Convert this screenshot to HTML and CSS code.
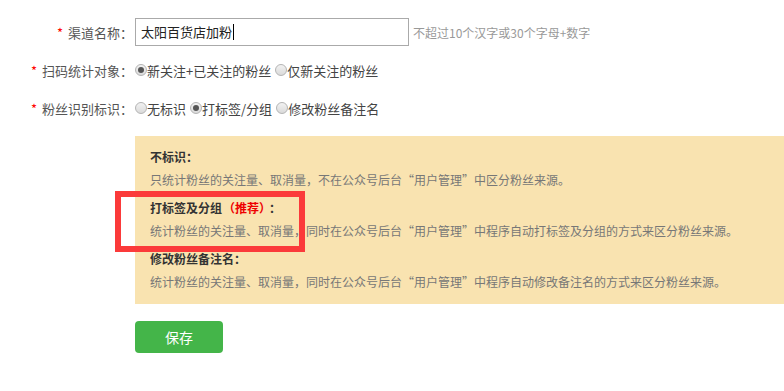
FILE: index.html
```html
<!DOCTYPE html>
<html>
	<head>
		<meta charset="utf-8">
		<title>渠道设置</title>
		<link rel="stylesheet" href="styles.css">
	</head>
	<body>
		<div class="form">
			<div class="row">
				<label class="label"><em>*</em> 渠道名称：</label>
				<div class="input">太阳百货店加粉<span class="caret"></span></div>
				<span class="hint">不超过10个汉字或30个字母+数字</span>
			</div>
			<div class="row">
				<label class="label"><em>*</em> 扫码统计对象：</label>
				<span class="radio checked"></span><span class="opt">新关注+已关注的粉丝</span>
				<span class="radio"></span><span class="opt">仅新关注的粉丝</span>
			</div>
			<div class="row">
				<label class="label"><em>*</em> 粉丝识别标识：</label>
				<span class="radio"></span><span class="opt">无标识</span>
				<span class="radio checked"></span><span class="opt">打标签/分组</span>
				<span class="radio"></span><span class="opt">修改粉丝备注名</span>
			</div>

			<div class="tips">
				<div class="block">
					<h4>不标识：</h4>
					<p>只统计粉丝的关注量、取消量，不在公众号后台“用户管理”中区分粉丝来源。</p>
				</div>
				<div class="block">
					<h4>打标签及分组<span class="red">（推荐）</span>：</h4>
					<p>统计粉丝的关注量、取消量，同时在公众号后台“用户管理”中程序自动打标签及分组的方式来区分粉丝来源。</p>
				</div>
				<div class="block">
					<h4>修改粉丝备注名：</h4>
					<p>统计粉丝的关注量、取消量，同时在公众号后台“用户管理”中程序自动修改备注名的方式来区分粉丝来源。</p>
				</div>
				<!-- 标注框 -->
				<div class="mark"></div>
			</div>

			<button class="save">保存</button>
		</div>
	</body>
</html>
```

FILE: styles.css
```css
*{
	margin: 0;
	padding: 0;
	box-sizing: border-box;
}

body{
	font-family: "Noto Sans CJK SC", "Liberation Sans", sans-serif;
	font-size: 13px;
	color: #444;
	background: #fff;
	overflow: hidden;
}

.form{
	padding-top: 18px;
}

.row{
	display: flex;
	align-items: center;
	height: 28px;
	margin-bottom: 10px;
}

.label{
	width: 135px;
	padding-right: 2px;
	text-align: right;
	flex-shrink: 0;
	color: #555;
}
.label em{
	font-style: normal;
	color: #f00;
	margin-right: 2px;
}

.input{
	width: 274px;
	height: 28px;
	border: 1px solid #aaa;
	padding-left: 5px;
	line-height: 26px;
	color: #222;
	display: flex;
	align-items: center;
}
.input .caret{
	display: inline-block;
	width: 1px;
	height: 16px;
	background: #000;
	margin-left: 1px;
}

.hint{
	font-size: 12px;
	color: #999;
	margin-left: 4px;
}

.radio{
	width: 12px;
	height: 12px;
	border-radius: 50%;
	border: 1px solid #b4b4b4;
	background: linear-gradient(#f2f2f2, #dadada);
	position: relative;
	flex-shrink: 0;
}
.radio.checked::after{
	content: "";
	position: absolute;
	left: 2px;
	top: 2px;
	width: 6px;
	height: 6px;
	border-radius: 50%;
	background: #555;
}
.opt{
	margin-right: 4px;
}

.tips{
	position: relative;
	margin: 14px 0 17px 135px;
	padding: 10px 15px 5px;
	background-color: #f9e3b0;
	font-size: 12px;
}
.tips .block{
	margin-bottom: 5px;
}
.tips h4{
	font-size: 12px;
	line-height: 22px;
	color: #333;
	font-weight: bold;
}
.tips h4 .red{
	color: #e00;
	margin: 0 4px 0 1px;
}
.tips p{
	line-height: 24px;
	color: #777;
}

.tips .mark{
	position: absolute;
	left: -20px;
	top: 55px;
	width: 190px;
	height: 61px;
	border: 6px solid #fb3a3a;
}

.save{
	display: block;
	margin-left: 135px;
	width: 88px;
	height: 32px;
	border: none;
	border-radius: 4px;
	background-color: #44b549;
	color: #fff;
	font-family: inherit;
	font-size: 14px;
	cursor: pointer;
}
```
